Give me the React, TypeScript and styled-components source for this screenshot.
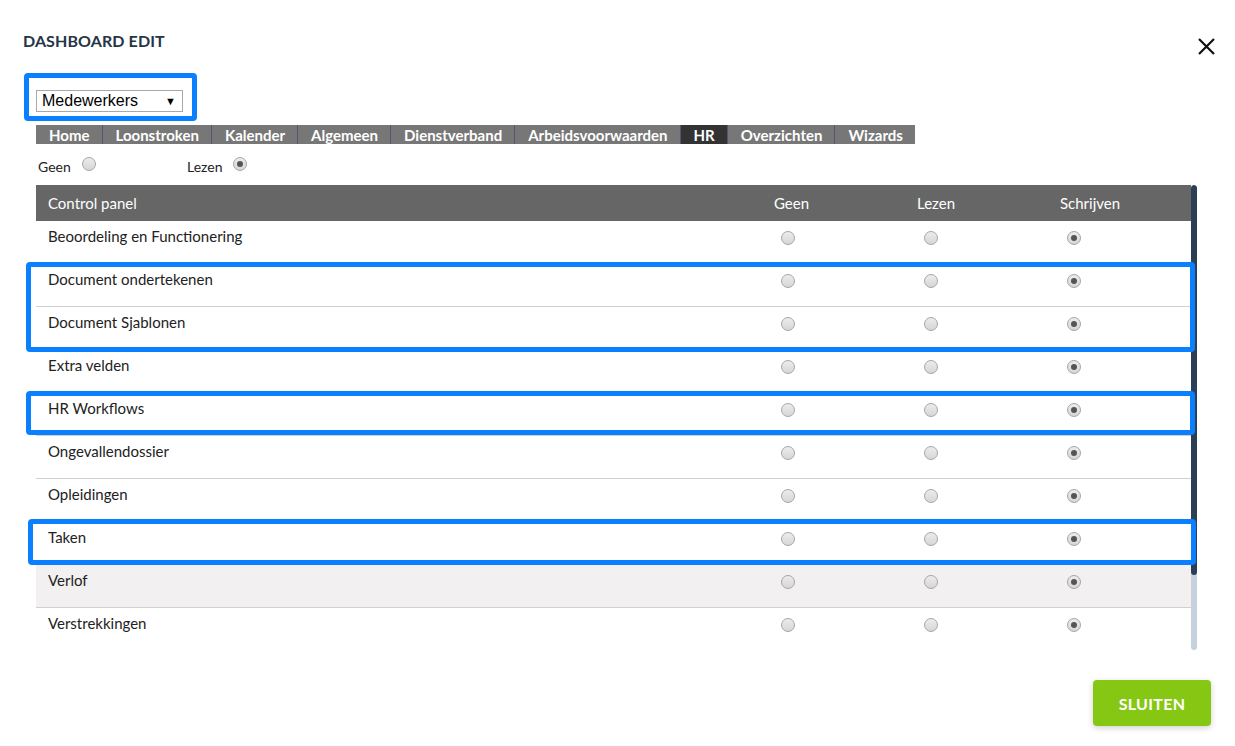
import React from 'react';
import styled, { createGlobalStyle } from 'styled-components';

const GlobalStyle = createGlobalStyle`
  html, body {
    margin: 0;
    padding: 0;
    background: #ffffff;
  }
  body {
    font-family: 'Lato', 'Open Sans', sans-serif;
    color: #222;
  }
`;

const Page = styled.div`
  position: relative;
  width: 1235px;
  height: 746px;
  overflow: hidden;
  box-sizing: border-box;
  padding: 0 38px 0 23px;
  display: flex;
  flex-direction: column;
`;

const Header = styled.header`
  display: flex;
  align-items: center;
  justify-content: space-between;
  height: 20px;
  margin-top: 30px;
  margin-right: -19px;
`;

const Title = styled.h2`
  margin: 0;
  font-size: 16px;
  font-weight: 700;
  letter-spacing: 0.1px;
  color: #253446;
  text-transform: uppercase;
`;

const CloseButton = styled.button`
  width: 20px;
  height: 20px;
  padding: 0;
  margin-top: 12px;
  border: none;
  background: none;
  cursor: pointer;
  display: flex;
  align-items: center;
  justify-content: center;
`;

const Body = styled.div`
  padding-left: 13px;
  display: flex;
  flex-direction: column;
`;

const SelectBox = styled.div`
  margin-top: 40px;
  width: 147px;
  height: 22px;
  box-sizing: border-box;
  border: 1px solid #a9a9a9;
  display: flex;
  align-items: center;
  justify-content: space-between;
  padding: 0 6px 0 5px;
  font-family: 'Liberation Sans', Arial, sans-serif;
  font-size: 16px;
  color: #000;
`;

const Caret = styled.span`
  font-size: 11px;
`;

const TabBar = styled.nav`
  margin-top: 13px;
  display: flex;
  align-self: flex-start;
  height: 19px;
  background: #777777;
`;

const Tab = styled.div<{ $active?: boolean }>`
  padding: 0 12px 0 13px;
  height: 19px;
  line-height: 20px;
  font-size: 15px;
  font-weight: 700;
  color: #ffffff;
  background: ${({ $active }) => ($active ? '#333333' : '#777777')};
  border-right: 1px solid #5b5470;
  white-space: nowrap;

  &:last-child {
    border-right: none;
  }
`;

const AccessRow = styled.div`
  display: flex;
  height: 41px;
  align-items: center;
  padding-left: 2px;
  padding-top: 3px;
  box-sizing: border-box;
`;

const AccessOption = styled.label`
  width: 149px;
  display: flex;
  align-items: center;
  gap: 11px;
  font-size: 14px;
  color: #222;

  & > span:last-child {
    margin-top: -5px;
  }
`;

const Radio = styled.span<{ $checked?: boolean }>`
  display: inline-block;
  position: relative;
  width: 14px;
  height: 14px;
  box-sizing: border-box;
  border-radius: 50%;
  border: 1px solid #a6a6a6;
  background: linear-gradient(#ececec, #d6d6d6);
  flex-shrink: 0;

  &::after {
    content: '';
    display: ${({ $checked }) => ($checked ? 'block' : 'none')};
    position: absolute;
    left: 3px;
    top: 3px;
    width: 6px;
    height: 6px;
    border-radius: 50%;
    background: #555555;
  }
`;

const TableFrame = styled.div`
  display: flex;
  height: 465px;
`;

const Table = styled.div`
  width: 1155px;
  height: 100%;
  overflow: hidden;
`;

const ScrollTrack = styled.div`
  width: 6px;
  height: 100%;
  border-radius: 3px;
  background: #c6d1dd;
  overflow: hidden;
`;

const ScrollThumb = styled.div`
  height: 390px;
  border-radius: 3px;
  background: #2b4057;
`;

const Grid = styled.div`
  display: grid;
  grid-template-columns: 1fr 143px 143px 131px;
`;

const HeadRow = styled(Grid)`
  height: 36px;
  background: #666666;
  color: #ffffff;
  font-size: 15px;
  align-items: center;
`;

const HeadCell = styled.div<{ $first?: boolean }>`
  padding-left: ${({ $first }) => ($first ? '12px' : '0')};
`;

const Row = styled(Grid)<{ $hover?: boolean }>`
  height: 43px;
  box-sizing: border-box;
  border-bottom: 1px solid #d0d0d0;
  background: ${({ $hover }) => ($hover ? '#f2f0f0' : '#ffffff')};
  font-size: 15px;
  color: #222;
`;

const LabelCell = styled.div`
  padding: 6px 0 0 12px;
  line-height: 18px;
`;

const RadioCell = styled.div`
  padding: 9px 0 0 7px;
`;

const Footer = styled.footer`
  margin-top: 30px;
  margin-right: -14px;
  display: flex;
  justify-content: flex-end;
`;

const PrimaryButton = styled.button`
  width: 118px;
  height: 46px;
  border: none;
  border-radius: 4px;
  background: #86c714;
  color: #ffffff;
  font-family: 'Lato', 'Open Sans', sans-serif;
  font-size: 16px;
  font-weight: 700;
  letter-spacing: 0.3px;
  box-shadow: 0 2px 6px rgba(0, 0, 0, 0.18);
  cursor: pointer;
`;

const Highlight = styled.div<{ $x: number; $y: number; $w: number; $h: number }>`
  position: absolute;
  left: ${({ $x }) => $x}px;
  top: ${({ $y }) => $y}px;
  width: ${({ $w }) => $w}px;
  height: ${({ $h }) => $h}px;
  box-sizing: border-box;
  border: 5px solid #0a80ff;
  border-radius: 4px;
  pointer-events: none;
`;

const tabs = [
  'Home',
  'Loonstroken',
  'Kalender',
  'Algemeen',
  'Dienstverband',
  'Arbeidsvoorwaarden',
  'HR',
  'Overzichten',
  'Wizards',
];

const modules = [
  'Beoordeling en Functionering',
  'Document ondertekenen',
  'Document Sjablonen',
  'Extra velden',
  'HR Workflows',
  'Ongevallendossier',
  'Opleidingen',
  'Taken',
  'Verlof',
  'Verstrekkingen',
];

const App: React.FC = () => {
  return (
    <>
      <GlobalStyle />
      <Page>
        <Header>
          <Title>Dashboard edit</Title>
          <CloseButton aria-label="Sluiten">
            <svg width="17" height="17" viewBox="0 0 17 17">
              <path d="M1 1 L16 16 M16 1 L1 16" stroke="#111" strokeWidth="2.2" />
            </svg>
          </CloseButton>
        </Header>

        <Body>
          <SelectBox>
            <span>Medewerkers</span>
            <Caret>▼</Caret>
          </SelectBox>

          <TabBar>
            {tabs.map(t => (
              <Tab key={t} $active={t === 'HR'}>
                {t}
              </Tab>
            ))}
          </TabBar>

          <AccessRow>
            <AccessOption>
              <span>Geen</span>
              <Radio />
            </AccessOption>
            <AccessOption>
              <span>Lezen</span>
              <Radio $checked />
            </AccessOption>
          </AccessRow>

          <TableFrame>
            <Table>
              <HeadRow>
                <HeadCell $first>Control panel</HeadCell>
                <HeadCell>Geen</HeadCell>
                <HeadCell>Lezen</HeadCell>
                <HeadCell>Schrijven</HeadCell>
              </HeadRow>
              {modules.map(name => (
                <Row key={name} $hover={name === 'Verlof'}>
                  <LabelCell>{name}</LabelCell>
                  <RadioCell>
                    <Radio />
                  </RadioCell>
                  <RadioCell>
                    <Radio />
                  </RadioCell>
                  <RadioCell>
                    <Radio $checked />
                  </RadioCell>
                </Row>
              ))}
            </Table>
            <ScrollTrack>
              <ScrollThumb />
            </ScrollTrack>
          </TableFrame>
        </Body>

        <Footer>
          <PrimaryButton>SLUITEN</PrimaryButton>
        </Footer>

        <Highlight $x={24} $y={73} $w={173} $h={48} />
        <Highlight $x={26} $y={262} $w={1169} $h={90} />
        <Highlight $x={26} $y={391} $w={1169} $h={44} />
        <Highlight $x={28} $y={519} $w={1168} $h={46} />
      </Page>
    </>
  );
};

export default App;
